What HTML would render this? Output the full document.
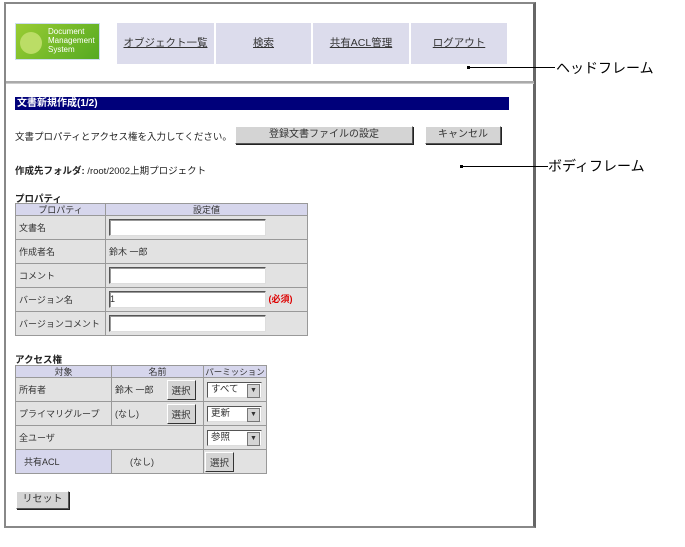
<!DOCTYPE html>
<html><head><meta charset="utf-8"><style>
*{margin:0;padding:0;box-sizing:border-box}
body{width:685px;height:547px;background:#fff;font-family:"Liberation Sans","Noto Sans CJK JP",sans-serif;font-size:9.5px;color:#222;position:relative;overflow:hidden}
.a{position:absolute;white-space:nowrap}
.frame{left:4px;top:2px;width:532px;height:526px;border:2px solid #888;border-right:3px solid #666}
.nav{background:#dcdcec;top:23px;height:41px;text-align:center;line-height:41px;font-size:10.5px;text-decoration:underline;color:#333}
.btn{background:#d4d4d4;border:1px solid;border-color:#fff #555 #555 #fff;box-shadow:1px 1px 0 #222;text-align:center;font-size:10px;color:#333}
.inp{background:#fff;border:1px solid;border-color:#555 #ddd #ddd #555;box-shadow:inset 1px 1px 0 #999}
table{border-collapse:collapse;position:absolute;table-layout:fixed}
td{border:1px solid #999;background:#e2e2e2;font-size:9px;padding:0 3px;color:#333;white-space:nowrap;overflow:hidden}
.h td{background:#d6d6ec;text-align:center;height:12px;line-height:10px}
.sel{background:#fff;border:1px solid;border-color:#555 #ddd #ddd #555;height:16px;width:55px;position:relative;font-size:9.5px;padding-left:3px;line-height:14px}
.sel:after{content:"▼";position:absolute;right:1px;top:1px;width:11px;height:12px;background:#d4d4d4;font-size:7px;line-height:12px;text-align:center;border:1px solid #777}
.sb{display:inline-block;background:#d4d4d4;border:1px solid;border-color:#fff #333 #333 #fff;padding:2px 4px;font-size:9.5px}
</style></head><body>
<div class="a frame"></div>
<div class="a" style="left:6px;top:81px;width:528px;height:3px;background:#aaa;border-bottom:1px solid #ccc"></div>
<div class="a" style="left:15px;top:23px;width:85px;height:37px;background:linear-gradient(135deg,#9c3,#5a2);border:1px solid #cde;"><div class="a" style="left:4px;top:8px;width:22px;height:22px;border-radius:50%;background:#bd6"></div><div class="a" style="left:32px;top:3px;color:#fff;font-size:8px;line-height:9px">Document<br>Management<br>System</div></div>
<div class="a nav" style="left:117px;width:97px">オブジェクト一覧</div>
<div class="a nav" style="left:216px;width:95px">検索</div>
<div class="a nav" style="left:313px;width:96px">共有ACL管理</div>
<div class="a nav" style="left:411px;width:96px">ログアウト</div>
<div class="a" style="left:467px;top:66px;width:3px;height:3px;background:#000"></div>
<div class="a" style="left:469px;top:67px;width:86px;height:1px;background:#000"></div>
<div class="a" style="left:556px;top:58px;font-size:14px;color:#000">ヘッドフレーム</div>
<div class="a" style="left:460px;top:165px;width:3px;height:3px;background:#000"></div>
<div class="a" style="left:462px;top:166px;width:86px;height:1px;background:#000"></div>
<div class="a" style="left:548px;top:156px;font-size:14px;color:#000">ボディフレーム</div>
<div class="a" style="left:15px;top:97px;width:494px;height:13px;background:#00007a;color:#fff;font-weight:bold;font-size:10px;line-height:13px;padding-left:2px">文書新規作成(1/2)</div>
<div class="a" style="left:15px;top:129px">文書プロパティとアクセス権を入力してください。</div>
<div class="a btn" style="left:235px;top:126px;width:178px;height:18px;line-height:16px">登録文書ファイルの設定</div>
<div class="a btn" style="left:425px;top:126px;width:76px;height:18px;line-height:16px">キャンセル</div>
<div class="a" style="left:15px;top:163px"><b>作成先フォルダ:</b> /root/2002上期プロジェクト</div>
<div class="a" style="left:15px;top:191px;font-weight:bold">プロパティ</div>
<table style="left:15px;top:203px;width:293px">
<colgroup><col style="width:90px"><col></colgroup>
<tr class="h"><td>プロパティ</td><td>設定値</td></tr>
<tr style="height:24px"><td>文書名</td><td><div class="inp" style="width:157px;height:17px"></div></td></tr>
<tr style="height:24px"><td>作成者名</td><td>鈴木 一郎</td></tr>
<tr style="height:24px"><td>コメント</td><td><div class="inp" style="width:157px;height:17px"></div></td></tr>
<tr style="height:24px"><td>バージョン名</td><td><div class="inp" style="width:157px;height:17px;display:inline-block;vertical-align:middle;line-height:15px">1</div> <b style="color:#d00;font-size:9px">(必須)</b></td></tr>
<tr style="height:24px"><td>バージョンコメント</td><td><div class="inp" style="width:157px;height:17px"></div></td></tr>
</table>
<div class="a" style="left:15px;top:352px;font-weight:bold">アクセス権</div>
<table style="left:15px;top:365px;width:251px">
<colgroup><col style="width:96px"><col style="width:54px"><col style="width:38px"><col style="width:63px"></colgroup>
<tr class="h"><td>対象</td><td colspan="2">名前</td><td style="padding:0;font-size:8.5px">パーミッション</td></tr>
<tr style="height:24px"><td>所有者</td><td style="border-right:none;padding-right:0">鈴木 一郎</td><td style="padding:0 1px;border-left:none"><span class="sb">選択</span></td><td style="padding:0 3px"><div class="sel">すべて</div></td></tr>
<tr style="height:24px"><td>プライマリグループ</td><td style="border-right:none;padding-right:0">(なし)</td><td style="padding:0 1px;border-left:none"><span class="sb">選択</span></td><td style="padding:0 3px"><div class="sel">更新</div></td></tr>
<tr style="height:24px"><td colspan="3">全ユーザ</td><td style="padding:0 3px"><div class="sel">参照</div></td></tr>
<tr style="height:24px"><td style="background:#d6d6ec;padding-left:8px">共有ACL</td><td colspan="2" style="padding-left:18px">(なし)</td><td style="padding:0 1px"><span class="sb">選択</span></td></tr>
</table>
<div class="a btn" style="left:16px;top:491px;width:53px;height:18px;line-height:16px">リセット</div>
</body></html>
